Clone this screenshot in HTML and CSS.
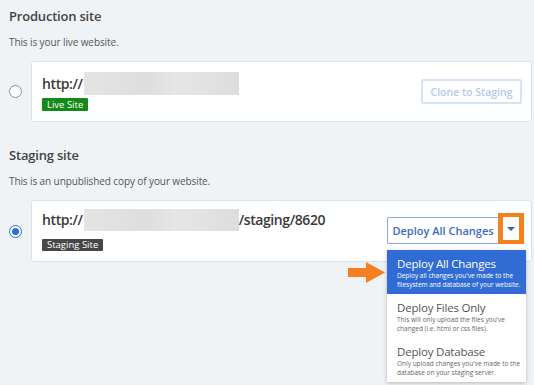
FILE: index.html
```html
<!DOCTYPE html>
<html lang="en">
<head>
    <meta charset="UTF-8">
    <meta name="viewport" content="width=device-width, initial-scale=1.0">
    <title>Staging</title>
    <link rel="stylesheet" href="styles.css">
</head>
<body>
    <div class="page">
        <section class="site">
            <h2>Production site</h2>
            <p class="desc">This is your live website.</p>
            <div class="site-row">
                <span class="radio"></span>
                <div class="card">
                    <div class="info">
                        <div class="url">http://<span class="blur"></span></div>
                        <span class="badge live">Live Site</span>
                    </div>
                    <button class="btn clone">Clone to Staging</button>
                </div>
            </div>
        </section>

        <section class="site staging">
            <h2>Staging site</h2>
            <p class="desc">This is an unpublished copy of your website.</p>
            <div class="site-row">
                <span class="radio checked"></span>
                <div class="card">
                    <div class="info">
                        <div class="url">http://<span class="blur"></span>/staging/8620</div>
                        <span class="badge stage">Staging Site</span>
                    </div>
                    <div class="deploy">
                        <button class="btn deploy-main">Deploy All Changes</button>
                        <button class="btn caret"><span class="tri"></span></button>

                        <div class="menu">
                            <svg class="pointer" width="37" height="21" viewBox="0 0 37 21">
                                <polygon points="0,6 18,6 18,0 37,10.5 18,21 18,15 0,15" fill="#f5801f"/>
                            </svg>
                            <div class="item active">
                                <div class="title">Deploy All Changes</div>
                                <div class="note">Deploy all changes you've made to the<br>filesystem and database of your website.</div>
                            </div>
                            <div class="item">
                                <div class="title">Deploy Files Only</div>
                                <div class="note">This will only upload the files you've<br>changed (i.e. html or css files).</div>
                            </div>
                            <div class="item">
                                <div class="title">Deploy Database</div>
                                <div class="note">Only upload changes you've made to the<br>database on your staging server.</div>
                            </div>
                        </div>
                    </div>
                </div>
            </div>
        </section>
    </div>
</body>
</html>
```

FILE: styles.css
```css
body {
    margin: 0;
    font-family: "Open Sans", "Noto Sans", Arial, sans-serif;
    background: #eff3f6;
    color: #333;
}
.page {
    min-height: 385px;
    box-sizing: border-box;
    padding: 7px 2px 0 9px;
}
.site h2 {
    margin: 0;
    font-size: 13px;
    line-height: 18px;
    font-weight: 600;
    color: #444;
    letter-spacing: -0.2px;
}
.staging {
    margin-top: 24px;
}
.desc {
    margin: 10px 0 0;
    font-size: 10px;
    line-height: 14px;
    color: #555;
    letter-spacing: -0.1px;
}
.site-row {
    display: flex;
    align-items: center;
    margin-top: 12px;
}
.radio {
    width: 11px;
    height: 11px;
    border: 1.5px solid #8f8f8f;
    border-radius: 50%;
    margin-right: 9px;
    background: #fff;
    flex-shrink: 0;
    position: relative;
}
.radio.checked {
    border-color: #2c6fd8;
}
.radio.checked:after {
    content: '';
    position: absolute;
    left: 2px;
    top: 2px;
    width: 7px;
    height: 7px;
    border-radius: 50%;
    background: #2c6fd8;
}
.card {
    flex: 1;
    display: flex;
    justify-content: space-between;
    align-items: center;
    background: #fff;
    border: 1px solid #dfe2e5;
    border-radius: 3px;
    padding: 10px 9px 10px 10px;
}
.staging .card {
    padding: 7px 9px 10px 10px;
}
.info {
    display: flex;
    flex-direction: column;
    align-items: flex-start;
}
.url {
    display: flex;
    align-items: center;
    font-size: 14px;
    line-height: 23px;
    font-weight: 600;
    color: #3a3a3a;
    letter-spacing: -0.4px;
}
.blur {
    display: inline-block;
    width: 155px;
    height: 23px;
    margin-left: 1px;
    background: linear-gradient(90deg, #e4e4e4, #dedede 40%, #e6e6e6 60%, #dddddd);
}
.staging .blur {
    height: 22px;
}
.badge {
    display: inline-block;
    margin-top: 3px;
    padding: 0 5px;
    font-size: 9.5px;
    line-height: 13px;
    color: #fff;
    border-radius: 1px;
}
.staging .badge {
    margin-top: 8px;
    line-height: 12px;
}
.badge.live {
    background: #15891a;
}
.badge.stage {
    background: #474747;
}
.btn {
    font-family: inherit;
    background: #fff;
    cursor: pointer;
    border-radius: 2px;
    white-space: nowrap;
}
.clone {
    border: 2px solid #d6e2f7;
    color: #b6c8ee;
    font-size: 10.5px;
    font-weight: 600;
    padding: 0;
    width: 101px;
    height: 25px;
}
.deploy {
    position: relative;
    display: flex;
    align-items: flex-end;
    align-self: flex-start;
    margin-top: 5px;
    margin-right: -2px;
}
.deploy-main {
    border: 1px solid #86a9e6;
    border-right: none;
    color: #3b69c6;
    font-size: 11px;
    font-weight: 600;
    height: 27px;
    width: 111px;
    padding: 0;
    border-radius: 2px 0 0 2px;
}
.caret {
    width: 26px;
    height: 31px;
    border: 4px solid #f5801f;
    border-width: 4px 5px;
    border-radius: 0;
    padding: 0;
    display: flex;
    align-items: center;
    justify-content: center;
}
.tri {
    width: 0;
    height: 0;
    border-left: 4px solid transparent;
    border-right: 4px solid transparent;
    border-top: 4px solid #2f63c4;
}
.menu {
    position: absolute;
    top: 37px;
    left: 0;
    width: 139px;
    background: #fff;
    box-shadow: 0 1px 4px rgba(0, 0, 0, 0.25);
    z-index: 10;
}
.pointer {
    position: absolute;
    left: -39px;
    top: 12px;
}
.item {
    padding: 6px 4px 5px 10px;
    color: #555;
}
.item.active {
    background: #316cd4;
    color: #fff;
}
.item .title {
    font-size: 11.5px;
    line-height: 15px;
    letter-spacing: -0.2px;
}
.item .note {
    font-size: 6.5px;
    line-height: 9px;
    color: #666;
    white-space: nowrap;
}
.item.active .note {
    color: #fff;
}
```
